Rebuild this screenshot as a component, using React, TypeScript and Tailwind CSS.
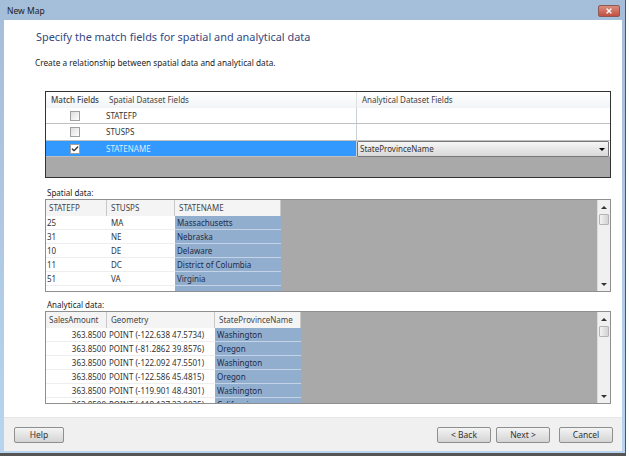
import React from 'react';
import { Check, X } from 'lucide-react';

const font = 'font-["Noto_Sans","Open_Sans",sans-serif]';

const matchRows = [
  { name: 'STATEFP', checked: false, value: '', height: 'h-[16px]' },
  { name: 'STUSPS', checked: false, value: '', height: 'h-[17px]' },
  { name: 'STATENAME', checked: true, value: 'StateProvinceName', height: 'h-[16px]' },
];

const spatialRows = [
  ['25', 'MA', 'Massachusetts'],
  ['31', 'NE', 'Nebraska'],
  ['10', 'DE', 'Delaware'],
  ['11', 'DC', 'District of Columbia'],
  ['51', 'VA', 'Virginia'],
  ['', '', ''],
];

const analyticalRows = [
  ['363.8500', 'POINT (-122.638 47.5734)', 'Washington'],
  ['363.8500', 'POINT (-81.2862 39.8576)', 'Oregon'],
  ['363.8500', 'POINT (-122.092 47.5501)', 'Washington'],
  ['363.8500', 'POINT (-122.586 45.4815)', 'Oregon'],
  ['363.8500', 'POINT (-119.901 48.4301)', 'Washington'],
  ['363.8500', 'POINT (-118.137 33.9025)', 'California'],
];

function Scrollbar() {
  return (
    <div className="w-[13px] shrink-0 bg-[#f0f0f0] border-l border-[#dcdcdc] flex flex-col items-center">
      <div className="h-[14px] shrink-0 flex items-center justify-center">
        <div className="w-0 h-0 border-x-[3px] border-x-transparent border-b-[3px] border-b-[#333]" />
      </div>
      <div className="w-[10px] h-[11px] shrink-0 rounded-[1px] border border-[#b4b4b4] bg-gradient-to-r from-[#f2f2f2] to-[#d2d2d2]" />
      <div className="flex-1" />
      <div className="h-[13px] shrink-0 flex items-center justify-center">
        <div className="w-0 h-0 border-x-[3px] border-x-transparent border-t-[3px] border-t-[#333]" />
      </div>
    </div>
  );
}

function DataPane({ headers, rows, widths, numeric }: { headers: string[]; rows: string[][]; widths: string[]; numeric?: boolean }) {
  return (
    <div className="h-[93px] w-[566px] flex border border-[#8f8f8f] bg-[#a9a9a9] overflow-hidden">
      <div className="overflow-hidden">
        <div className="flex h-[16px] bg-[#f4f4f4]">
          {headers.map((h, i) => (
            <div key={h} className={`${widths[i]} shrink-0 border-r border-[#c8c8c8] ${i === 0 ? 'pl-[3px]' : 'pl-[4px]'} text-[8px] leading-[15px] text-[#444]`}>{h}</div>
          ))}
        </div>
        {rows.map((r, ri) => (
          <div key={ri} className="flex h-[14px]">
            {r.map((c, i) => {
              const last = i === r.length - 1;
              let pad = 'pl-[2px]';
              if (i === 0) pad = numeric ? 'text-right pr-[1px]' : 'pl-[1px]';
              if (i === 1 && !numeric) pad = 'pl-[4px]';
              return (
                <div
                  key={i}
                  className={`${widths[i]} shrink-0 border-b text-[8px] leading-[13px] whitespace-nowrap overflow-hidden ${pad} ${
                    last ? 'bg-[#92aecf] border-[#c4d4e6] text-[#1c2c48]' : 'bg-white border-[#eeeeee] text-[#333]'
                  }`}
                >
                  {c}
                </div>
              );
            })}
          </div>
        ))}
      </div>
      <div className="flex-1" />
      <Scrollbar />
    </div>
  );
}

function MatchGrid() {
  return (
    <div className="w-[566px] h-[87px] flex flex-col border border-[#333] bg-[#a9a9a9]">
      <div className="flex h-[16px] bg-gradient-to-b from-white to-[#f2f4f6] text-[8px] leading-[16px] text-[#444]">
        <div className="w-[58px] text-center font-medium">Match Fields</div>
        <div className="w-[253px] border-r border-[#dde0e4] pl-[5px]">Spatial Dataset Fields</div>
        <div className="flex-1 pl-[5px]">Analytical Dataset Fields</div>
      </div>
      {matchRows.map((row) => (
        <div
          key={row.name}
          className={`flex ${row.height} border-b border-[#c0c0c0] text-[8px] leading-[16px] ${
            row.checked ? 'bg-[#3399ff] text-[#d8ecff]' : 'bg-white text-[#333]'
          }`}
        >
          <div className="w-[58px] flex items-center justify-center">
            <div className={`w-[10px] h-[10px] border border-[#a0a0a0] flex items-center justify-center ${row.checked ? 'bg-white' : 'bg-gradient-to-br from-[#dddddd] to-white'}`}>
              {row.checked && <Check className="w-[8px] h-[8px] text-[#333]" strokeWidth={4} />}
            </div>
          </div>
          <div className="w-[253px] border-r border-[#c8d0d8] pl-[2px]">{row.name}</div>
          <div className="flex-1 bg-white">
            {row.value && (
              <div className="h-[16px] mr-[1px] px-[2px] flex items-center justify-between border border-[#777] rounded-[1px] bg-gradient-to-b from-[#f6f6f6] to-[#d8d8d8] text-[#333]">
                <span>{row.value}</span>
                <div className="w-0 h-0 mr-[1px] border-x-[3px] border-x-transparent border-t-[3px] border-t-black" />
              </div>
            )}
          </div>
        </div>
      ))}
    </div>
  );
}

function WizardButton({ label, width = 'w-[54px]', className }: { label: string; width?: string; className?: string }) {
  return (
    <button className={`${width} h-[16px] rounded-[2px] border border-[#8e8f8f] bg-gradient-to-b from-[#f4f4f4] to-[#d4d4d4] text-[8.5px] leading-[14px] text-[#333] ${className ?? ''}`}>
      {label}
    </button>
  );
}

export default function App() {
  return (
    <div className={`w-[629px] h-[460px] bg-white overflow-hidden ${font}`}>
      <div className="w-[626px] h-[456px] flex flex-col border-b-[3px] border-r border-[#555] bg-gradient-to-b from-[#a4bdd9] to-[#b9d4ee]">
        <div className="h-[20px] flex shrink-0 items-start justify-between pl-[7px] pr-[5px]">
          <span className="text-[8.5px] leading-[22px] text-[#222]">New Map</span>
          <div className="w-[22px] h-[12px] mt-[5px] rounded-[2px] border border-[#8a5a55] bg-gradient-to-b from-[#d98c80] to-[#c2503f] flex items-center justify-center">
            <X className="w-[8px] h-[8px] text-white" strokeWidth={4} />
          </div>
        </div>
        <div className="flex-1 ml-[4px] mr-[3px] mb-[2px] flex flex-col bg-white min-h-0">
          <div className="flex-1 pl-[31px]">
            <h1 className="mt-[8px] pl-[1px] text-[10.9px] leading-[18px] font-normal text-[#34497f]">Specify the match fields for spatial and analytical data</h1>
            <p className="mt-[10px] text-[8.25px] leading-[13px] text-[#222]">Create a relationship between spatial data and analytical data.</p>
            <div className="mt-[22px] ml-[10px]">
              <MatchGrid />
              <p className="mt-[9px] ml-[2px] text-[8px] leading-[12px] text-[#222]">Spatial data:</p>
              <DataPane
                headers={['STATEFP', 'STUSPS', 'STATENAME']}
                rows={spatialRows}
                widths={['w-[61px]', 'w-[68px]', 'w-[106px]']}
              />
              <p className="mt-[7px] ml-[2px] text-[8px] leading-[12px] text-[#222]">Analytical data:</p>
              <DataPane
                headers={['SalesAmount', 'Geometry', 'StateProvinceName']}
                rows={analyticalRows}
                widths={['w-[61px]', 'w-[108px]', 'w-[86px]']}
                numeric
              />
            </div>
          </div>
          <div className="h-[34px] shrink-0 flex items-center justify-between pl-[10px] pr-[9px] bg-[#f0f0f0] border-t border-[#e6e6e6]">
            <WizardButton label="Help" width="w-[50px]" />
            <div className="flex">
              <WizardButton label="< Back" />
              <WizardButton label="Next >" className="ml-[5px]" />
              <WizardButton label="Cancel" className="ml-[9px]" />
            </div>
          </div>
        </div>
      </div>
    </div>
  );
}
